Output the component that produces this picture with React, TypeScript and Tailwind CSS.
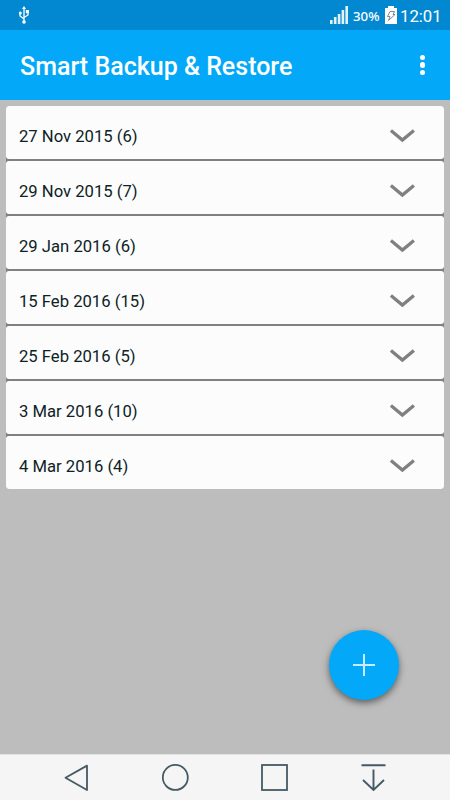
const backups = [
  { date: "27 Nov 2015", count: 6 },
  { date: "29 Nov 2015", count: 7 },
  { date: "29 Jan 2016", count: 6 },
  { date: "15 Feb 2016", count: 15 },
  { date: "25 Feb 2016", count: 5 },
  { date: "3 Mar 2016", count: 10 },
  { date: "4 Mar 2016", count: 4 },
];

/* STATUS BAR */

function StatusBar() {
  return (
    <div className="flex h-[30px] shrink-0 items-center bg-[#0288d1] pl-[18px] pr-[9px] text-white">
      <svg width="12" height="18" viewBox="0 0 12 18" fill="none" stroke="white" strokeWidth="1.3">
        <path d="M6 2v14M2 6.5v3.5L6 13M10 5.5v3.5L6 11.5" />
        <path d="M6 0L8 3H4z" fill="white" stroke="none" />
        <circle cx="2.3" cy="6.9" r="1.5" fill="white" stroke="none" />
        <rect x="7.8" y="4" width="3.2" height="3.2" fill="white" stroke="none" />
        <circle cx="6" cy="16" r="1.8" fill="white" stroke="none" />
      </svg>
      <div className="ml-auto flex items-center">
        <svg width="18" height="18" viewBox="0 0 18 18" fill="#e3f3fb">
          <rect x="0" y="14" width="2.6" height="4" />
          <rect x="3.9" y="11" width="2.6" height="7" />
          <rect x="7.8" y="8" width="2.6" height="10" />
          <rect x="11.6" y="4" width="2.6" height="14" />
          <rect x="15.4" y="0" width="2.6" height="18" />
        </svg>
        <span className="ml-[5px] mt-[2px] w-[27px] whitespace-nowrap font-['Noto_Sans',sans-serif] text-[13.3px] font-medium leading-4">
          30%
        </span>
        <svg className="ml-[5px]" width="12" height="18" viewBox="0 0 12 18">
          <path d="M3 0h6v2h3v16H0V2h3z" fill="white" />
          <path d="M5 5.5h4.5L8 8.5h2L3.5 14.5 5 10.5H2.5z" fill="none" stroke="#7d8990" />
        </svg>
        <span className="ml-[3px] mt-[3px] w-[41px] whitespace-nowrap text-[16.7px] leading-5">12:01</span>
      </div>
    </div>
  );
}

function AppBar() {
  return (
    <header className="flex h-[70px] shrink-0 items-center justify-between bg-[#03a9f8] pl-5 pr-[25px] text-white">
      <h1 className="mt-[4px] whitespace-nowrap text-[25px] font-medium leading-8">Smart Backup &amp; Restore</h1>
      <button aria-label="More options" className="flex flex-col gap-[2.4px]">
        <span className="size-[5.2px] rounded-full bg-white" />
        <span className="size-[5.2px] rounded-full bg-white" />
        <span className="size-[5.2px] rounded-full bg-white" />
      </button>
    </header>
  );
}

function BackupList() {
  return (
    <ul className="mx-1.5 mt-1.5 flex flex-col gap-[2px] rounded-[3px] bg-[#808080]">
      {backups.map((b) => (
        <li
          key={b.date}
          className="flex h-[53px] items-center justify-between rounded-[3px] bg-[#fcfcfc] pl-[13px] pr-[29px] pt-[7px]"
        >
          <span className="mt-[2px] text-[16.65px] leading-5 text-[#0c2225]">
            {b.date} ({b.count})
          </span>
          <svg width="26" height="14" viewBox="0 0 26 14" fill="none" stroke="#808080" strokeWidth="3.3">
            <path d="M1.9 1.5L13.4 11L24.9 1.5" />
          </svg>
        </li>
      ))}
    </ul>
  );
}

/* SYSTEM NAVIGATION */

function NavBar() {
  return (
    <nav className="flex h-[46px] shrink-0 items-center gap-[71px] border-t border-[#e2e2e2] bg-[#f5f5f5] pl-[63px]">
      <svg width="28" height="28" viewBox="0 0 28 28" fill="none" stroke="#455a64" strokeWidth="1.8">
        <path d="M24 1.6V26L2.5 13.8z" strokeLinejoin="round" />
      </svg>
      <svg width="28" height="28" viewBox="0 0 28 28" fill="none" stroke="#455a64" strokeWidth="1.8">
        <circle cx="13.3" cy="13.4" r="12.5" />
      </svg>
      <svg width="28" height="28" viewBox="0 0 28 28" fill="none" stroke="#455a64" strokeWidth="1.8">
        <rect x="1" y="1" width="25" height="25" />
      </svg>
      <svg width="28" height="28" viewBox="0 0 28 28" fill="none" stroke="#455a64" strokeWidth="1.9">
        <path d="M1.5 1.3h24M13.5 5.5v20M3 16l10.5 10L24 16" />
      </svg>
    </nav>
  );
}

export default function App() {
  return (
    <div className="relative flex h-[800px] w-[450px] flex-col overflow-hidden bg-[#bdbdbd] font-[Roboto,sans-serif]">
      <StatusBar />
      <AppBar />
      <main className="flex-1">
        <BackupList />
      </main>
      <button
        aria-label="Add backup"
        className="absolute bottom-[100px] right-[51px] flex size-[70px] items-center justify-center rounded-full bg-[#03a9f8] shadow-[0_3px_7px_rgba(0,0,0,0.5)]"
      >
        <svg width="22" height="22" viewBox="0 0 22 22" stroke="#c8ecff" strokeWidth="2">
          <path d="M11 0v22M0 11h22" />
        </svg>
      </button>
      <NavBar />
    </div>
  );
}
